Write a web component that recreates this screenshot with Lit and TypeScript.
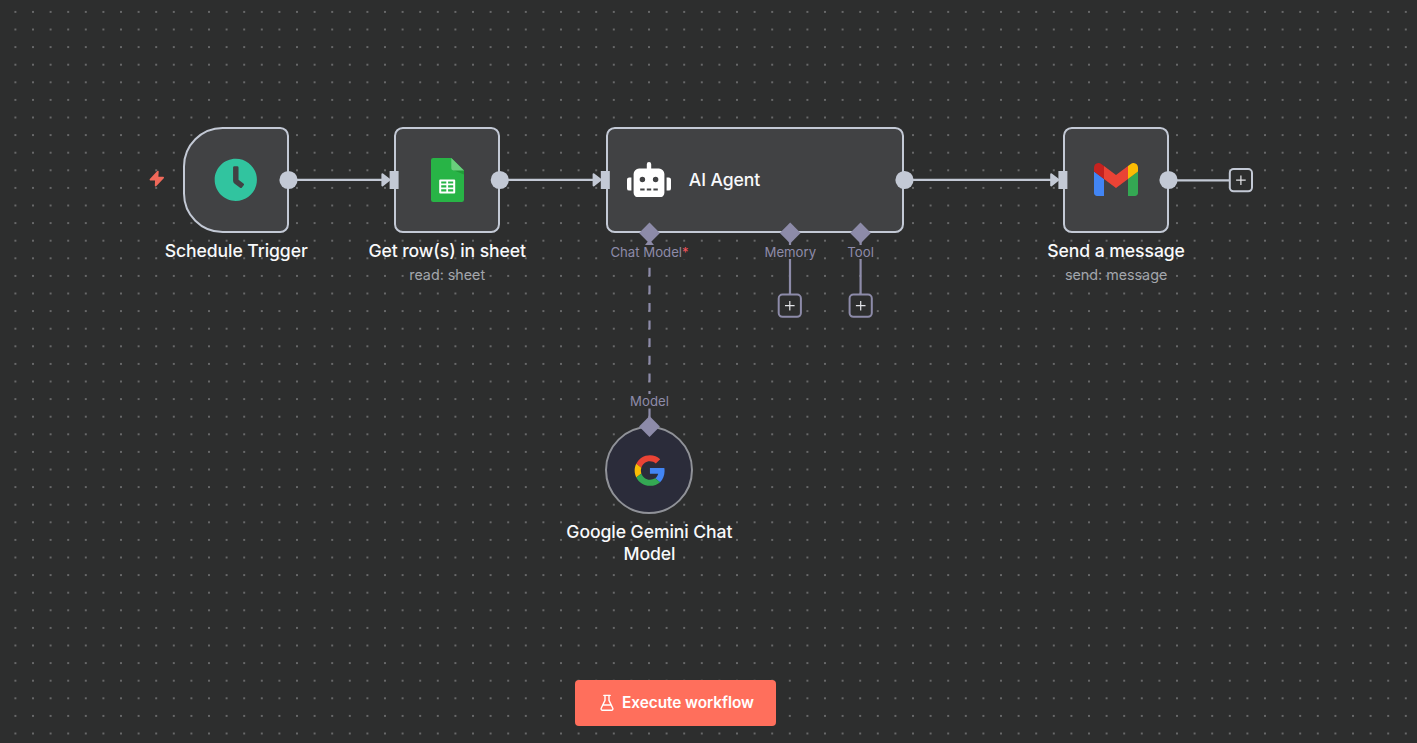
import { LitElement, html, svg, css } from "lit";
import { customElement, property } from "lit/decorators.js";

const clockIcon = svg`<svg width="43.6" height="43.6" viewBox="0 0 512 512"><path fill="#31c49f" d="M256,8C119,8,8,119,8,256S119,504,256,504,504,393,504,256,393,8,256,8Zm92.49,313h0l-20,25a16,16,0,0,1-22.49,2.5h0l-67-49.72a40,40,0,0,1-15-31.23V112a16,16,0,0,1,16-16h32a16,16,0,0,1,16,16V256l58,42.5A16,16,0,0,1,348.49,321Z"/></svg>`;

const sheetIcon = svg`<svg width="33" height="44" viewBox="0 0 33 44">
  <path fill="#28b446" d="M2.2 0H20.3L33 12.6V41.8A2.2 2.2 0 0 1 30.8 44H2.2A2.2 2.2 0 0 1 0 41.8V2.2A2.2 2.2 0 0 1 2.2 0Z"/>
  <path fill="#219b38" d="M21.4 11.7 33 16.4V12.4L26 8Z"/>
  <path fill="#6ace7c" d="M20.3 0 33 12.4H22.4A2.1 2.1 0 0 1 20.3 10.3Z"/>
  <path fill="#fff" fill-rule="evenodd" d="M9.2 21.4H23.2A1 1 0 0 1 24.2 22.4V34.6A1 1 0 0 1 23.2 35.6H9.2A1 1 0 0 1 8.2 34.6V22.4A1 1 0 0 1 9.2 21.4ZM10.2 23.4V25.4H15.3V23.4ZM17.1 23.4V25.4H22.2V23.4ZM10.2 27.3V29.4H15.3V27.3ZM17.1 27.3V29.4H22.2V27.3ZM10.2 31.3V33.5H15.3V31.3ZM17.1 31.3V33.5H22.2V31.3Z"/></svg>`;

const robotIcon = svg`<svg width="44" height="35.2" viewBox="0 0 640 512"><path fill="#fff" d="M32,224H64V416H32A31.96166,31.96166,0,0,1,0,384V256A31.96166,31.96166,0,0,1,32,224Zm512-48V448a64.06328,64.06328,0,0,1-64,64H160a64.06328,64.06328,0,0,1-64-64V176a79.974,79.974,0,0,1,80-80H288V32a32,32,0,0,1,64,0V96H464A79.974,79.974,0,0,1,544,176ZM264,256a40,40,0,1,0-40,40A39.997,39.997,0,0,0,264,256Zm-8,128H192v32h64Zm96,0H288v32h64ZM456,256a40,40,0,1,0-40,40A39.997,39.997,0,0,0,456,256Zm-8,128H384v32h64ZM640,256V384a31.96166,31.96166,0,0,1-32,32H576V224h32A31.96166,31.96166,0,0,1,640,256Z"/></svg>`;

const gmailIcon = svg`<svg width="44" height="33" viewBox="52 42 88 66">
  <path fill="#4285f4" d="M58 108h14V74L52 59v43c0 3.32 2.69 6 6 6"/>
  <path fill="#34a853" d="M120 108h14c3.32 0 6-2.69 6-6V59l-20 15"/>
  <path fill="#fbbc04" d="M120 48v26l20-15v-8c0-7.42-8.47-11.65-14.4-7.2"/>
  <path fill="#ea4335" d="M72 74V48l24 18 24-18v26L96 92"/>
  <path fill="#c5221f" d="M52 51v8l20 15V48l-5.6-4.2c-5.94-4.45-14.4-.22-14.4 7.2"/></svg>`;

const googleIcon = svg`<svg width="30.6" height="30.6" viewBox="-1 -0.4 48 48" overflow="visible">
  <path fill="#ea4335" d="M24 9.5c3.54 0 6.71 1.22 9.21 3.6l6.85-6.85C35.9 2.38 30.47 0 24 0 14.62 0 6.51 5.38 2.56 13.22l7.98 6.19C12.43 13.72 17.74 9.5 24 9.5z"/>
  <path fill="#4285f4" d="M46.98 24.55c0-1.57-.15-3.09-.38-4.55H24v9.02h12.94c-.58 2.96-2.26 5.48-4.78 7.18l7.73 6c4.51-4.18 7.09-10.36 7.09-17.65z"/>
  <path fill="#fbbc05" d="M10.53 28.59c-.48-1.45-.76-2.99-.76-4.59s.27-3.14.76-4.59l-7.98-6.19C.92 16.46 0 20.12 0 24c0 3.88.92 7.54 2.56 10.78l7.97-6.19z"/>
  <path fill="#34a853" d="M24 48c6.48 0 11.93-2.13 15.89-5.81l-7.73-6c-2.15 1.45-4.92 2.3-8.16 2.3-6.26 0-11.57-4.22-13.47-9.91l-7.98 6.19C6.51 42.62 14.62 48 24 48z"/></svg>`;

const flaskIcon = svg`<svg class="flask" width="16" height="18" viewBox="0 0 16 18" fill="none" stroke="#fff" stroke-width="1.4" stroke-linecap="round" stroke-linejoin="round"><path d="M4.8 1.4H11.2M6 1.6V6.4L2.2 14.2A1.5 1.5 0 0 0 3.5 16.3H12.5A1.5 1.5 0 0 0 13.8 14.2L10 6.4V1.6M4.2 11H11.8"/></svg>`;

interface NodeData {
  kind: string;
  x: number;
  y: number;
  icon: unknown;
  title: string;
  subtitle?: string;
}

const nodes: NodeData[] = [
  { kind: "trigger", x: 183.4, y: 127, icon: clockIcon, title: "Schedule Trigger" },
  { kind: "regular", x: 394.4, y: 127, icon: sheetIcon, title: "Get row(s) in sheet", subtitle: "read: sheet" },
  { kind: "agent", x: 605.6, y: 127, icon: robotIcon, title: "AI Agent" },
  { kind: "regular", x: 1063.3, y: 127, icon: gmailIcon, title: "Send a message", subtitle: "send: message" },
  { kind: "model", x: 605.4, y: 426.2, icon: googleIcon, title: "Google Gemini Chat Model" },
];

@customElement("flow-node")
class FlowNode extends LitElement {
  @property() kind = "regular";
  @property() heading = "";
  @property() subtitle = "";
  @property({ attribute: false }) icon: unknown;

  static styles = css`
    :host { display: block; }
    .node { display: flex; flex-direction: column; align-items: center; width: 105.6px; }
    .box {
      box-sizing: border-box; width: 105.6px; height: 105.6px; flex: none;
      display: flex; align-items: center; justify-content: center;
      background: #414244; border: 2px solid #c3c9d5; border-radius: 8.8px;
    }
    svg { display: block; }
    .trigger .box { border-radius: 39.6px 8.8px 8.8px 39.6px; }
    .agent, .agent .box { width: 298.6px; }
    .agent .box { justify-content: flex-start; padding-left: 19.8px; gap: 17.4px; }
    .model { width: 88px; }
    .model .box { width: 88px; height: 88px; border-radius: 50%; background: #2b2c3a; border-color: #909298; }
    .title { color: #f8f9fb; font-size: 17.6px; line-height: 22px; font-weight: 550; letter-spacing: -0.08px; text-align: center; }
    .caption { width: 190px; margin-top: 7.4px; display: flex; flex-direction: column; align-items: center; }
    .model .caption { margin-top: 6.6px; }
    .subtitle { margin-top: 3px; color: #a3a6ac; font-size: 14.3px; line-height: 20px; white-space: nowrap; }
  `;

  render() {
    const agent = this.kind === "agent";
    return html`<div class="node ${this.kind}">
      <div class="box">${this.icon}${agent ? html`<div class="title">${this.heading}</div>` : ""}</div>
      ${agent ? "" : html`<div class="caption">
        <div class="title">${this.heading}</div>
        ${this.subtitle ? html`<div class="subtitle">${this.subtitle}</div>` : ""}
      </div>`}
    </div>`;
  }
}

@customElement("app-root")
class AppRoot extends LitElement {
  static styles = css`
    :host { display: block; font-family: Inter, sans-serif; }
    .canvas { position: relative; width: 1417px; height: 743px; overflow: hidden; background: #2d2e2e; }
    .layer { position: absolute; inset: 0; display: block; }
    .placed { position: absolute; }
    .port { position: absolute; transform: translate(-50%, -50%); color: #8d8ba9; font-size: 13.2px; line-height: 14px; white-space: nowrap; }
    .backed { background: #2d2e2e; }
    .required { color: #f5545c; }
    .execute {
      position: absolute; left: 575px; top: 680px; width: 201.4px; height: 46px; padding: 0 0 0 1.6px;
      display: flex; align-items: center; justify-content: center; gap: 7px;
      border: 0; border-radius: 4px; background: #ff6f5c; color: #fff;
      font: 600 15.4px/20px Inter, sans-serif; letter-spacing: -0.06px;
    }
    .flask { display: block; }
  `;

  private edge(from: number, to: number) {
    return svg`<path d="M${from} 179.8H${to - 6}" stroke="#c3c9d5" stroke-width="2.2"/>
      <path d="M${to - 7.2} 174.2L${to} 179.8L${to - 7.2} 185.4Z" fill="#c3c9d5" stroke="#c3c9d5" stroke-width="2" stroke-linejoin="round"/>`;
  }

  private plus(x: number, y: number, color: string) {
    return svg`<rect x=${x - 11.1} y=${y - 11.1} width="22.2" height="22.2" rx="3.8" fill="#2d2e2e" stroke=${color} stroke-width="2"/>
      <path d="M${x - 4.8} ${y}H${x + 4.8}M${x} ${y - 4.8}V${y + 4.8}" stroke="#e3e4e8" stroke-width="1.2"/>`;
  }

  private diamond(x: number, y: number) {
    return svg`<path d="M${x} ${y - 10.4}L${x + 10.4} ${y}L${x} ${y + 10.4}L${x - 10.4} ${y}Z" fill="#8d8ba9"/>`;
  }

  render() {
    return html`<div class="canvas">
      <svg class="layer" width="1417" height="743">
        <defs><pattern id="dots" width="17.6" height="17.6" patternUnits="userSpaceOnUse" x="6.6" y="3.1">
          <circle cx="8.8" cy="8.8" r="0.66" fill="#cfd0d3"/></pattern></defs>
        <rect width="1417" height="743" fill="url(#dots)"/>
        ${this.edge(290, 389.6)}${this.edge(501, 600.8)}${this.edge(906, 1058.4)}
        <path d="M1170 180.3H1229" stroke="#c3c9d5" stroke-width="2.2"/>
        <path d="M649.5 417.4V240" stroke="#8d8ba9" stroke-width="2.2" stroke-dasharray="8.8 8.8"/>
        <path d="M649.5 239.5L655.2 246.5H643.8Z" fill="#8d8ba9"/>
        <path d="M790 240V294M860.6 240V294" stroke="#8d8ba9" stroke-width="2.2"/>
        ${this.plus(1240.9, 180.2, "#c3c9d5")}
        ${this.plus(789.8, 305.7, "#8d8ba9")}
        ${this.plus(860.7, 305.7, "#8d8ba9")}
        <path d="M157.9 171.6L150.4 179.6H155.9L155.6 185.6L163.2 177.6H157.5Z" fill="#f0695a" stroke="#f0695a" stroke-width="1.6" stroke-linejoin="round"/>
      </svg>
      ${nodes.map((n) => html`<flow-node class="placed" style="left:${n.x}px;top:${n.y}px"
        .kind=${n.kind} .icon=${n.icon} .heading=${n.title} .subtitle=${n.subtitle ?? ""}></flow-node>`)}
      <svg class="layer" width="1417" height="743">
        ${[288.5, 499.8, 904.5, 1168.5].map((x) => svg`<circle cx=${x} cy="180" r="9.1" fill="#c3c9d5"/>`)}
        ${[389.6, 600.8, 1058.4].map((x) => svg`<rect x=${x} y="171" width="9" height="18" fill="#c3c9d5"/>`)}
        ${this.diamond(649.5, 233)}${this.diamond(790.2, 233)}${this.diamond(860.5, 233)}${this.diamond(649.5, 426.5)}
      </svg>
      <div class="port backed" style="left:649.5px;top:252px">Chat Model<span class="required">*</span></div>
      <div class="port backed" style="left:790.3px;top:252px">Memory</div>
      <div class="port backed" style="left:860.6px;top:252px">Tool</div>
      <div class="port backed" style="left:649.5px;top:401px">Model</div>
      <button class="execute">${flaskIcon}<span>Execute workflow</span></button>
    </div>`;
  }
}
